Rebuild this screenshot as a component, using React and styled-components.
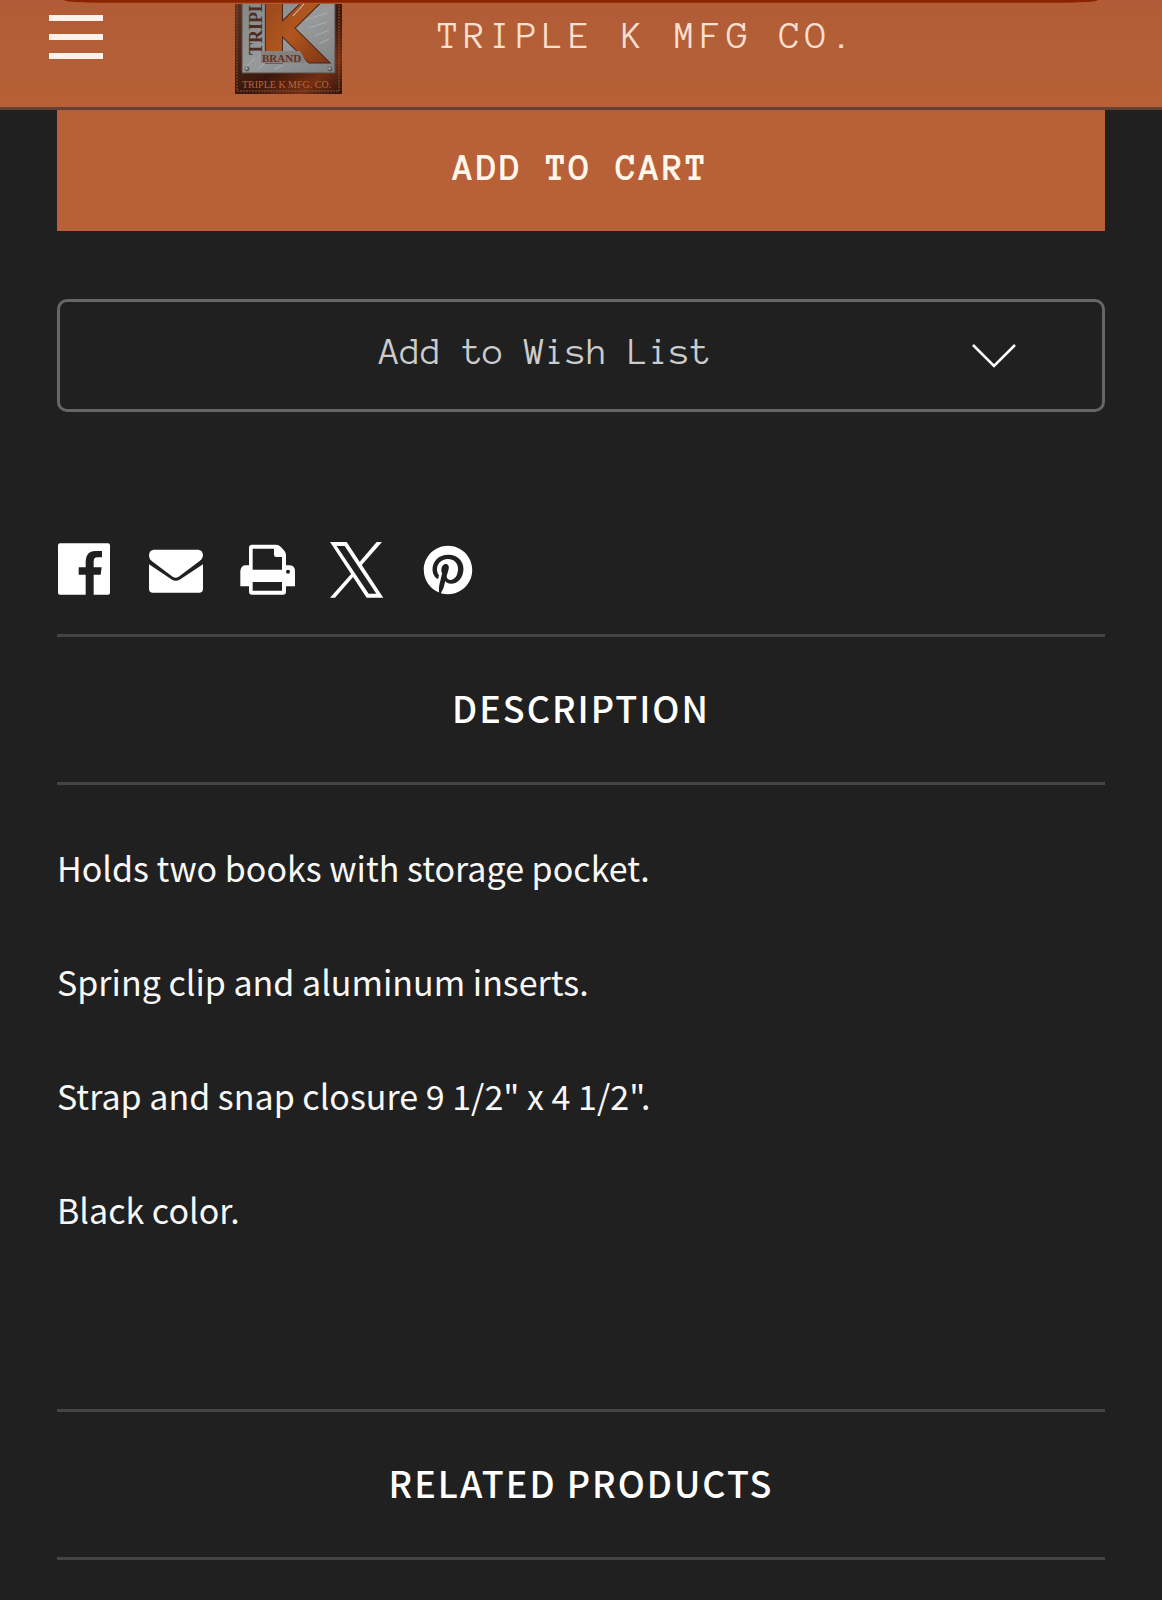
import React from "react";
import styled, { createGlobalStyle } from "styled-components";
import { FaPinterest } from "react-icons/fa";

const mono = `"Anonymous Pro", "Liberation Mono", monospace`;
const sans = `"Source Sans Pro", "Noto Sans CJK SC", sans-serif`;

const GlobalStyle = createGlobalStyle`
  *, *::before, *::after { box-sizing: border-box; }
  body { margin: 0; background: #202020; color: #fff; font-family: ${sans}; }
`;

const Page = styled.div`
  min-height: 100vh;
`;

const Header = styled.header`
  position: relative;
  display: flex;
  align-items: flex-start;
  height: 110px;
  padding: 4px 49px 0;
  background: linear-gradient(#b15c36, #b35f37 50%, #b86038);
  border-bottom: 3px solid #653f32;
  &::before {
    content: "";
    position: absolute;
    top: 0;
    left: 64px;
    right: 64px;
    height: 3px;
    background: linear-gradient(#8a2400 60%, #a43c12);
    border-radius: 0 0 40px 40px / 0 0 3px 3px;
  }
`;

const MenuButton = styled.button`
  display: flex;
  flex-direction: column;
  gap: 13px;
  width: 54px;
  margin: 11px 132px 0 0;
  padding: 0;
  border: 0;
  background: none;
`;

const Bar = styled.span`
  height: 6px;
  background: #fff2ea;
`;

const LogoLink = styled.a`
  display: block;
  flex: none;
  width: 107px;
  height: 90px;
  margin-right: 96px;
`;

const SiteTitle = styled.h1`
  margin: 12px 0 0;
  color: #fbdfcf;
  font: 400 39px/40px ${mono};
  letter-spacing: 5px;
  white-space: nowrap;
`;

const Main = styled.main`
  padding: 0 57px;
`;

const CartButton = styled.button`
  display: block;
  width: 100%;
  height: 121px;
  padding: 0 0 6px;
  border: 0;
  background: #b86038;
  color: #fff6ea;
  font: 700 39px/40px ${mono};
  letter-spacing: 2px;
`;

const WishButton = styled.button`
  display: flex;
  align-items: center;
  width: 100%;
  height: 113px;
  margin-top: 68px;
  padding: 0 86px 0 59px;
  border: 3px solid #666;
  border-radius: 10px;
  background: none;
  color: #ccc;
  font: 400 38px/40px ${mono};
`;

const WishLabel = styled.span`
  flex: 1;
  padding-bottom: 8px;
  text-align: center;
`;

const ShareList = styled.ul`
  display: flex;
  gap: 37px;
  margin: 129px 0 36px;
  padding: 0;
  list-style: none;
`;

const ShareLink = styled.a`
  display: flex;
  align-items: center;
  justify-content: center;
  width: 54px;
  height: 57px;
  color: #fff;
  svg { overflow: visible; }
`;

const SectionTitle = styled.h2`
  margin: 0;
  padding: 42px 0 47px;
  border-top: 3px solid #444;
  border-bottom: 3px solid #444;
  font: 500 36px/56px ${sans};
  letter-spacing: 2px;
  text-align: center;
`;

const Description = styled.div`
  padding: 54px 0 171px;
`;

const Paragraph = styled.p`
  margin: 0;
  color: #f8f8f8;
  font-size: 34px;
  line-height: 57px;
  & + & { margin-top: 57px; }
`;

const Logo = () => (
  <svg width="107" height="90" viewBox="0 0 107 90" role="img" aria-label="Triple K Brand">
    <defs>
      <linearGradient id="leather" x1="0" y1="0" x2="1" y2="1">
        <stop offset="0" stopColor="#5b3222" />
        <stop offset="0.55" stopColor="#3a160c" />
        <stop offset="0.8" stopColor="#752e12" />
        <stop offset="1" stopColor="#30130c" />
      </linearGradient>
      <linearGradient id="steel" x1="0" y1="0" x2="1" y2="1">
        <stop offset="0" stopColor="#858687" />
        <stop offset="0.5" stopColor="#98999b" />
        <stop offset="1" stopColor="#808183" />
      </linearGradient>
      <linearGradient id="rust" x1="0" y1="0" x2="1" y2="1">
        <stop offset="0" stopColor="#8e421b" />
        <stop offset="0.5" stopColor="#b0561f" />
        <stop offset="1" stopColor="#6c2a10" />
      </linearGradient>
    </defs>
    <rect width="107" height="90" fill="url(#leather)" />
    <path d="M2 0V87H104V0" fill="none" stroke="#85543a" strokeDasharray="2 1" />
    <path d="M7 0V69H100V0" fill="url(#steel)" stroke="#5b4b43" />
    <path d="M70 8l12-3M70 16l22-7M74 24l18-6M80 32l14-6M84 40l10-5M12 62l8-8M22 66l8-7M40 65l8-4" stroke="#adaeb0" />
    <text x="22" y="59" fontFamily="DejaVu Sans" fontWeight="700" fontSize="91" fill="url(#rust)" stroke="#4b2416">K</text>
    <path d="M58 12L69 0" stroke="#ddd4cc" strokeWidth="1" />
    <text transform="translate(27 51) rotate(-90)" fontFamily="Liberation Serif" fontWeight="700" fontSize="18" fill="#4d2c22">TRIPLE</text>
    <path d="M26 47H65L72 59H26Z" fill="#85817f" />
    <text x="27" y="58" fontFamily="Liberation Serif" fontWeight="700" fontSize="11" fill="#66301f">BRAND</text>
    <circle cx="12" cy="65" r="2.5" fill="#5d5e60" />
    <circle cx="11.5" cy="64.5" r="1" fill="#ccc" />
    <circle cx="95" cy="65" r="2.5" fill="#5d5e60" />
    <circle cx="94.5" cy="64.5" r="1" fill="#ccc" />
    <text x="7" y="84" fontFamily="Liberation Serif" fontSize="10" fill="#b5683d">TRIPLE K MFG. CO.</text>
  </svg>
);

const Glyph = ({ children }) => (
  <svg width="54" height="57" viewBox="0 0 162 171" fill="currentColor" fillRule="evenodd" aria-hidden="true">
    {children}
  </svg>
);

const shares = [
  {
    label: "Facebook",
    icon: (
      <Glyph>
        <path d="M9 7H153Q159 7 159 13V155Q159 161 153 161H110V101H131L134 79H110V62C110 53 113 49 122 49H135V30H115C95 30 86 43 86 66V79H65V101H86V161H9Q3 161 3 155V13Q3 7 9 7Z" />
      </Glyph>
    ),
  },
  {
    label: "Email",
    icon: (
      <Glyph>
        <path d="M17 26H151Q165 28 165 44Q164 54 154 61L91 108Q83 113 75 108L12 61Q3 54 3 44Q3 28 17 26Z" />
        <path d="M3 70L70 115Q83 124 97 115L165 70V143Q165 155 153 155H15Q3 155 3 143Z" />
      </Glyph>
    ),
  },
  {
    label: "Print",
    icon: (
      <Glyph>
        <path d="M39 11H111Q119 11 125 17L136 29Q141 35 141 43V73H153Q168 75 168 90V136H141V152Q141 161 132 161H39Q30 161 30 152V136H4V90Q6 73 20 73H30V20Q30 11 39 11ZM41 23V86H129V48H112Q105 48 105 41V23ZM41 123V149H129V123ZM141 92A6 6 0 1 0 153 92A6 6 0 1 0 141 92Z" />
      </Glyph>
    ),
  },
  {
    label: "X",
    icon: (
      <Glyph>
        <path d="M0 3H50L160 170H110ZM20 15L116 158H139L44 15Z" />
        <path d="M140 3H156L92 76L86 66Z" />
        <path d="M0 170H15L74 103L68 94Z" />
      </Glyph>
    ),
  },
  { label: "Pinterest", icon: <FaPinterest size={50} aria-hidden="true" /> },
];

const paragraphs = [
  "Holds two books with storage pocket.",
  "Spring clip and aluminum inserts.",
  'Strap and snap closure 9 1/2" x 4 1/2".',
  "Black color.",
];

export default function App() {
  return (
    <Page>
      <GlobalStyle />
      <Header>
        <MenuButton type="button" aria-label="Menu">
          <Bar />
          <Bar />
          <Bar />
        </MenuButton>
        <LogoLink href="#home">
          <Logo />
        </LogoLink>
        <SiteTitle>TRIPLE K MFG CO.</SiteTitle>
      </Header>
      <Main>
        <CartButton type="button">ADD TO CART</CartButton>
        <WishButton type="button" aria-haspopup="true">
          <WishLabel>Add to Wish List</WishLabel>
          <svg width="44" height="24" viewBox="0 0 44 24" fill="none" stroke="#fff" strokeWidth="2.5" aria-hidden="true">
            <path d="M1 1L22 22L43 1" />
          </svg>
        </WishButton>
        <ShareList>
          {shares.map((s) => (
            <li key={s.label}>
              <ShareLink href={`#${s.label.toLowerCase()}`} aria-label={s.label}>
                {s.icon}
              </ShareLink>
            </li>
          ))}
        </ShareList>
        <SectionTitle>DESCRIPTION</SectionTitle>
        <Description>
          {paragraphs.map((text) => (
            <Paragraph key={text}>{text}</Paragraph>
          ))}
        </Description>
        <SectionTitle>RELATED PRODUCTS</SectionTitle>
      </Main>
    </Page>
  );
}
